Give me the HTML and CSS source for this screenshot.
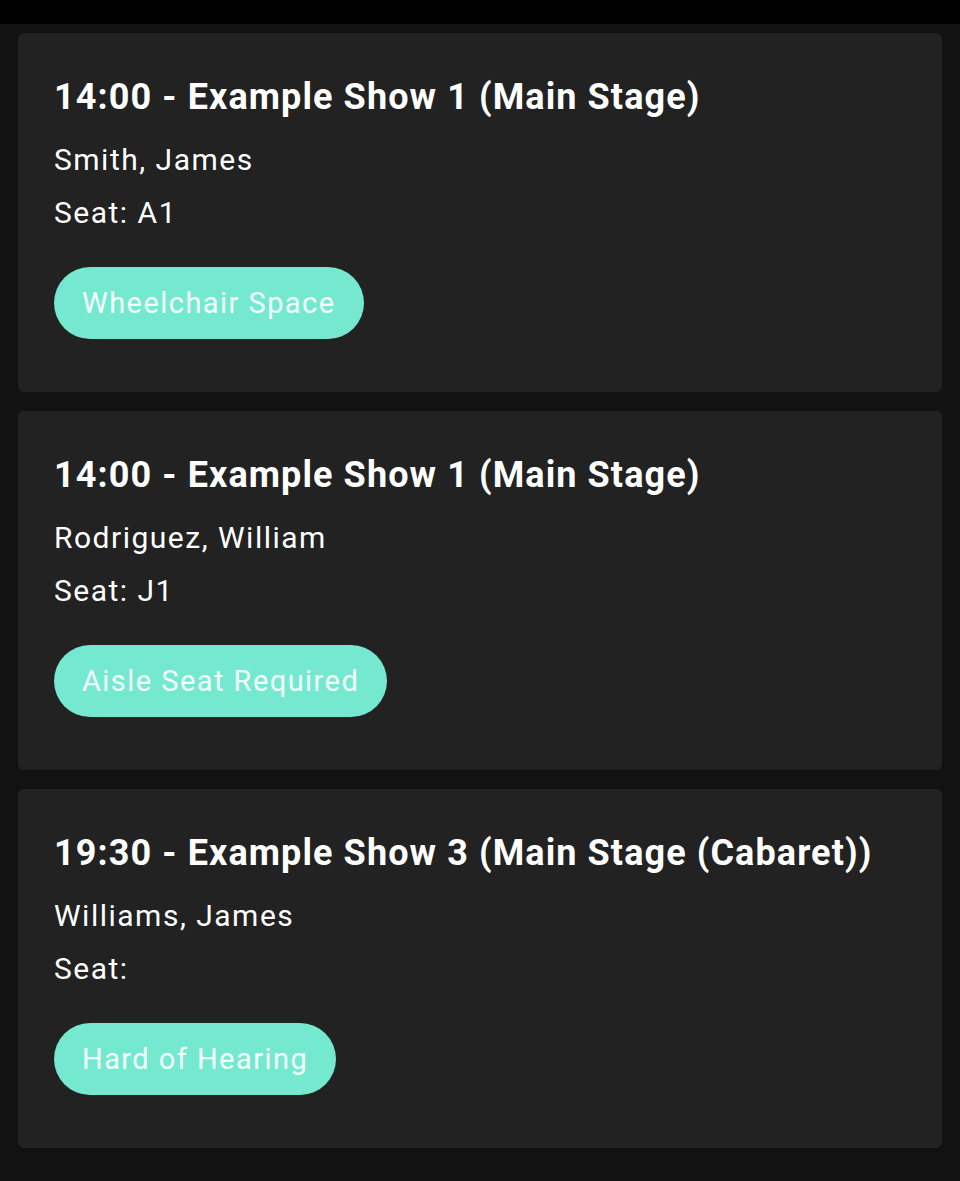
FILE: index.html
```html
<!DOCTYPE html>
<html>
<head>
<meta charset="utf-8">
<link rel="stylesheet" href="styles.css">
</head>
<body>
<div class="statusbar"></div>
<main class="list">
  <section class="card">
    <h2 class="title">14:00 - Example Show 1 (Main Stage)</h2>
    <p class="line name">Smith, James</p>
    <p class="line">Seat: A1</p>
    <div class="chips"><span class="chip">Wheelchair Space</span></div>
  </section>
  <section class="card">
    <h2 class="title">14:00 - Example Show 1 (Main Stage)</h2>
    <p class="line name">Rodriguez, William</p>
    <p class="line">Seat: J1</p>
    <div class="chips"><span class="chip">Aisle Seat Required</span></div>
  </section>
  <section class="card">
    <h2 class="title">19:30 - Example Show 3 (Main Stage (Cabaret))</h2>
    <p class="line name">Williams, James</p>
    <p class="line">Seat: </p>
    <div class="chips"><span class="chip">Hard of Hearing</span></div>
  </section>
</main>
</body>
</html>
```
FILE: styles.css
```css
html, body {
  margin: 0;
  padding: 0;
  background: #121212;
  font-family: Roboto, "Noto Sans", sans-serif;
  color: #ffffff;
}
.statusbar {
  height: 24px;
  background: #000000;
}
.list {
  display: flex;
  flex-direction: column;
  gap: 19px;
  padding: 9px 18px 0 18px;
}
.card {
  background: #222222;
  border-radius: 6px;
  padding: 44px 36px 52px 36px;
  height: 359px;
  box-sizing: border-box;
}
.title {
  margin: 0;
  font-size: 36px;
  line-height: 40px;
  font-weight: 700;
  letter-spacing: 1.1px;
  white-space: nowrap;
}
.line {
  margin: 0;
  font-size: 30px;
  line-height: 53px;
  font-weight: 400;
  letter-spacing: 1.5px;
}
.name {
  margin-top: 16px;
}
.chips {
  display: flex;
  margin-top: 28px;
}
.chip {
  display: inline-flex;
  align-items: center;
  height: 72px;
  padding: 0 28px;
  border-radius: 36px;
  background: #75e9d0;
  color: #f2fffb;
  font-size: 29px;
  letter-spacing: 1.45px;
}
```
